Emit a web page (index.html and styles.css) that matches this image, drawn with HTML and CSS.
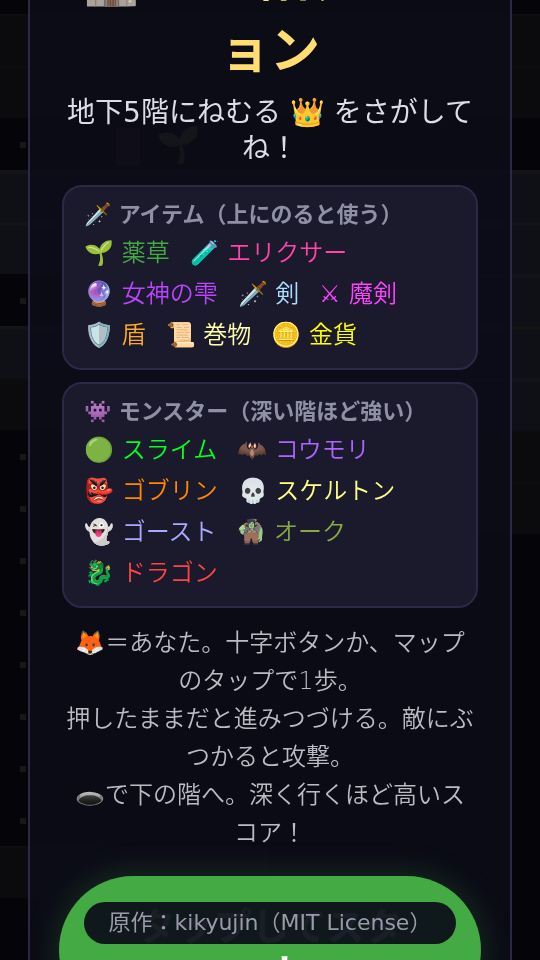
FILE: index.html
```
<!DOCTYPE html>
<html lang="ja">
<head>
    <meta charset="UTF-8">
    <meta name="viewport" content="width=device-width, initial-scale=1">
    <title>ダンジョン</title>
    <link rel="stylesheet" href="styles.css">
</head>
<body>
    <!-- マップ -->
    <div class="board" aria-hidden="true">
        <div class="row"><i class="wall"></i><i class="wall"></i></div>
        <div class="row"><i class="wall"></i><i class="wall"></i></div>
        <div class="row"><i class="floor"></i><i></i></div>
        <div class="row"><i class="wall lit"></i><i class="wall lit"></i></div>
        <div class="row"><i class="wall lit"></i><i class="wall lit"></i></div>
        <div class="row"><i class="floor"></i><i class="wall lit"></i></div>
        <div class="row"><i class="wall lit"></i><i class="wall lit"></i></div>
        <div class="row"><i class="wall"></i><i class="wall lit"></i></div>
        <div class="row"><i class="floor"></i><i class="wall"></i></div>
        <div class="row"><i class="floor"></i><i class="wall"></i></div>
        <div class="row"><i class="floor"></i><i></i></div>
        <div class="row"><i class="floor"></i><i></i></div>
        <div class="row"><i class="floor"></i><i></i></div>
        <div class="row"><i class="floor"></i><i></i></div>
        <div class="row"><i class="floor"></i><i></i></div>
        <div class="row"><i class="floor"></i><i></i></div>
        <div class="row"><i class="wall"></i><i></i></div>
        <span class="door"></span>
        <span class="sprout">🌱</span>
    </div>

    <div class="overlay">
        <div class="modal">
            <h1>🏰 一の階ダンジョン</h1>
            <p class="lead">地下5階にねむる 👑 をさがしてね！</p>
            <section class="legend">
                <h2>🗡️ アイテム（上にのると使う）</h2>
                <ul>
                    <li class="herb">🌱 薬草</li>
                    <li class="elixir">🧪 エリクサー</li>
                    <li class="drop">🔮 女神の雫</li>
                    <li class="sword">🗡️ 剣</li>
                    <li class="magic">⚔ 魔剣</li>
                    <li class="shield">🛡️ 盾</li>
                    <li class="scroll">📜 巻物</li>
                    <li class="gold">🪙 金貨</li>
                </ul>
            </section>
            <section class="legend">
                <h2>👾 モンスター（深い階ほど強い）</h2>
                <ul>
                    <li class="slime">🟢 スライム</li>
                    <li class="bat">🦇 コウモリ</li>
                    <li class="goblin">👺 ゴブリン</li>
                    <li class="skeleton">💀 スケルトン</li>
                    <li class="ghost">👻 ゴースト</li>
                    <li class="orc">🧌 オーク</li>
                    <li class="dragon">🐉 ドラゴン</li>
                </ul>
            </section>
            <p class="help">🦊＝あなた。十字ボタンか、マップのタップで1歩。<br>押したままだと進みつづける。敵にぶつかると攻撃。<br>🕳️で下の階へ。深く行くほど高いスコア！</p>
            <button type="button" class="start">タップしてスタート</button>
        </div>
    </div>
    <div class="credit">原作：kikyujin（MIT License）</div>
</body>
</html>
```
FILE: styles.css
```
* {
    box-sizing: border-box;
}
html, body {
    height: 100%;
}
body {
    margin: 0;
    overflow: hidden;
    background: #050509;
    color: #dddde8;
    font-family: "DejaVu Sans", "Noto Sans CJK JP", sans-serif;
}

/* マップ */
.board {
    position: fixed;
    top: 14px;
    left: 0;
    right: 0;
}
.row {
    display: flex;
    height: 52px;
}
.row i {
    flex: 1;
}
.wall {
    background: #0b0b0e;
    border-top: 2px solid #0e0e10;
}
.wall.lit {
    background: #0e1015;
    border-top: 4px solid #121416;
}
.floor {
    padding: 24px 20px;
}
.floor::before {
    content: "";
    display: block;
    width: 6px;
    height: 6px;
    background: #17171a;
}
.door {
    position: absolute;
    left: 116px;
    top: 114px;
    width: 24px;
    height: 38px;
    background: #2a1618;
}
.sprout {
    position: absolute;
    left: 156px;
    top: 110px;
    font-size: 36px;
    opacity: 0.5;
}

/* タイトル画面 */
.overlay {
    position: relative;
    display: flex;
    align-items: center;
    justify-content: center;
    height: 100%;
    padding: 0 28px;
}
.modal {
    width: 100%;
    flex-shrink: 0;
    padding: 36px 32px 30px;
    background: rgba(12, 12, 24, 0.9);
    border: 2px solid #2b2848;
    border-radius: 32px;
    text-align: center;
}
h1 {
    margin: 0 0 8px;
    color: #ffdd70;
    font-size: 50px;
    line-height: 72px;
}
.lead {
    margin: 0 0 18px;
    font-size: 28px;
    line-height: 36px;
}
.legend {
    margin-bottom: 12px;
    padding: 12px 20px;
    background: #1b192c;
    border: 2px solid #2b2848;
    border-radius: 20px;
    text-align: left;
}
.legend h2 {
    margin: 0 0 2px;
    color: #9090a5;
    font-size: 22px;
    line-height: 32px;
}
.legend ul {
    display: flex;
    flex-wrap: wrap;
    column-gap: 20px;
    margin: 0;
    padding: 0;
    list-style: none;
    font-size: 24px;
    font-weight: 350;
    line-height: 41px;
}
.herb { color: #44aa44; }
.elixir { color: #ff44aa; }
.drop { color: #bb44ff; }
.sword { color: #aaddff; }
.magic { color: #ff44ff; }
.shield { color: #ffaa22; }
.scroll { color: #ffffaa; }
.gold { color: #ffff00; }
.slime { color: #00ff22; }
.bat { color: #aa66ff; }
.goblin { color: #ff8800; }
.skeleton { color: #ffff88; }
.ghost { color: #aaaaff; }
.orc { color: #88aa44; }
.dragon { color: #ff4444; }
.help {
    margin: 16px 0 24px;
    padding: 0 2px;
    color: #bbbbc4;
    font-size: 24px;
    font-weight: 350;
    line-height: 38px;
}
.start {
    display: block;
    width: calc(100% + 6px);
    margin: 0 -3px;
    padding: 28px 64px;
    border: none;
    border-radius: 80px;
    background: #44aa44;
    color: #fff;
    font-family: inherit;
    font-size: 38px;
    font-weight: bold;
    line-height: 46px;
    box-shadow: 0 0 32px rgba(68, 170, 68, 0.25);
}
.credit {
    position: fixed;
    left: 84px;
    right: 84px;
    bottom: 16px;
    border-radius: 24px;
    background: rgba(12, 16, 24, 0.94);
    color: #9a9aac;
    font-size: 22px;
    line-height: 42px;
    text-align: center;
}
```
